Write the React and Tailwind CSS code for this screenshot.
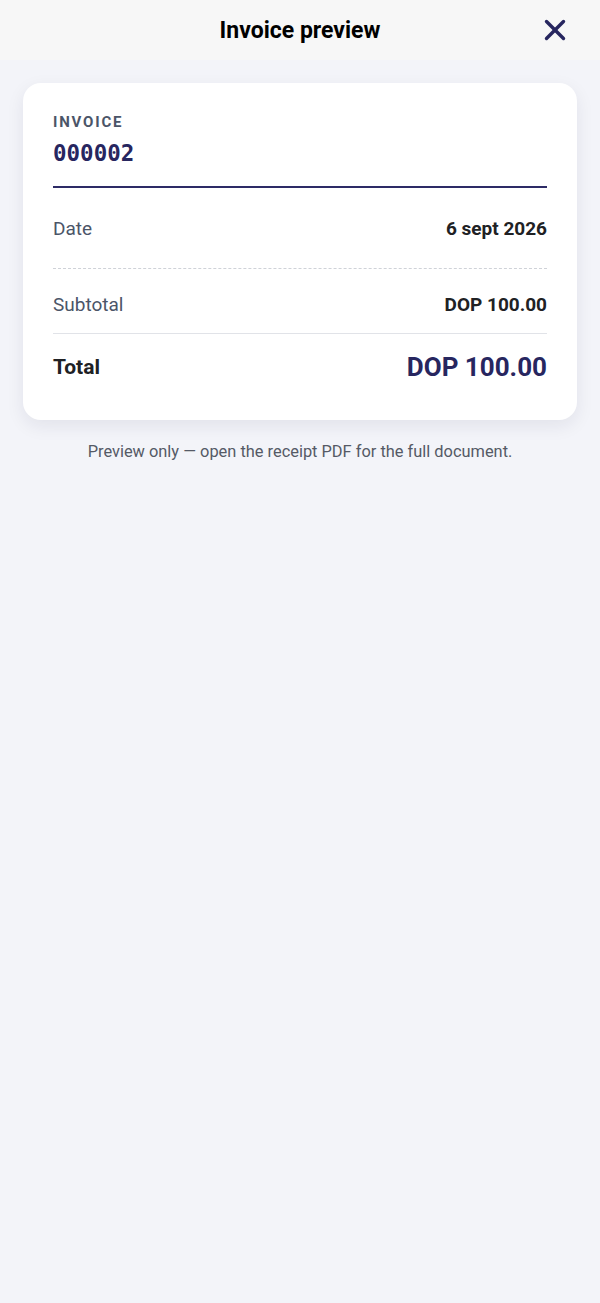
import React from 'react';

const NAVY = 'text-[#27265f]';

const Header = () => (
  <div className="relative flex h-[60px] items-center justify-center bg-[#f7f7f7]">
    <h1 className="pt-[2px] text-[23px] font-bold text-black">Invoice preview</h1>
    <button className="absolute right-[34px] top-[19px] flex h-[22px] w-[22px] items-center justify-center text-[#27265f]">
      <svg width="22" height="22" viewBox="0 0 22 22" fill="none" stroke="currentColor" strokeWidth="3.4" strokeLinecap="round">
        <path d="M2.5 2.5 L19.5 19.5" />
        <path d="M19.5 2.5 L2.5 19.5" />
      </svg>
    </button>
  </div>
);

const App = () => {
  return (
    <div className="min-h-[1303px] bg-[#f3f4f9] font-['Roboto',sans-serif]">
      <Header />

      <div className="px-[23px] pt-[23px]">
        <div className="rounded-[18px] bg-white px-[30px] pt-[29px] pb-[37px] shadow-[0_6px_18px_rgba(30,30,60,0.08)]">
          {/* Invoice number */}
          <div className="border-b-2 border-[#2d2b66] pb-[19px]">
            <p className="text-[15px] font-bold uppercase leading-5 tracking-[0.12em] text-[#4b5568]">Invoice</p>
            <p className={`mt-[7px] font-['DejaVu_Sans_Mono',monospace] text-[22.5px] font-bold leading-7 ${NAVY}`}>000002</p>
          </div>

          <div className="flex items-center justify-between border-b border-dashed border-[#cfd2d8] pt-[29px] pb-[27px] leading-6">
            <span className="text-[19px] text-[#4b5568]">Date</span>
            <span className="text-[19px] font-bold text-[#202124]">6 sept 2026</span>
          </div>

          <div className="flex items-center justify-between border-b border-[#e1e3e8] pt-[24px] pb-[16px] leading-6">
            <span className="text-[19px] text-[#4b5568]">Subtotal</span>
            <span className="text-[19px] font-bold text-[#202124]">DOP 100.00</span>
          </div>

          <div className="flex items-center justify-between pt-[17px] leading-8">
            <span className="text-[21px] font-bold text-[#202124]">Total</span>
            <span className={`text-[26px] font-bold ${NAVY}`}>DOP 100.00</span>
          </div>
        </div>

        <p className="mt-[21px] text-center text-[16.4px] leading-[22px] text-[#555a66]">
          Preview only — open the receipt PDF for the full document.
        </p>
      </div>
    </div>
  );
};

export default App;
